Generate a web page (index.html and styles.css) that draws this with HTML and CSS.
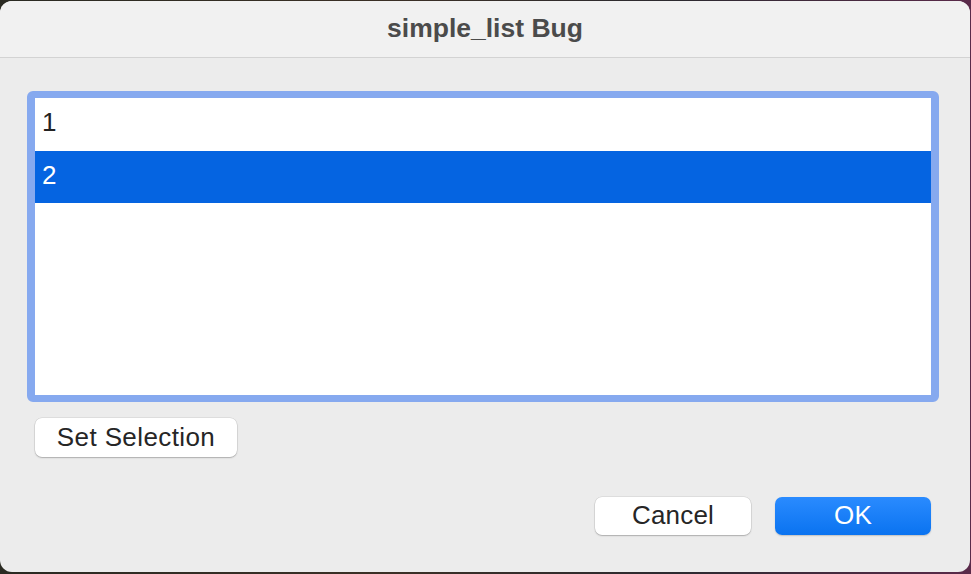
FILE: index.html
```html
<!DOCTYPE html>
<html>
<head>
<meta charset="utf-8">
<link rel="stylesheet" href="styles.css">
</head>
<body>
<div class="window">
  <div class="titlebar">simple_list Bug</div>
  <div class="content">
    <div class="listbox">
      <div class="row">1</div>
      <div class="row selected">2</div>
    </div>
    <div class="tools">
      <button class="btn">Set Selection</button>
    </div>
    <div class="actions">
      <button class="btn dialog">Cancel</button>
      <button class="btn dialog primary">OK</button>
    </div>
  </div>
</div>
</body>
</html>
```

FILE: styles.css
```css
html, body {
  margin: 0;
  padding: 0;
}
body {
  width: 971px;
  height: 574px;
  overflow: hidden;
  background: linear-gradient(90deg, #2a2a22 0%, #3b3026 40%, #2c2a30 70%, #5a2a4a 100%);
  font-family: "Liberation Sans", Arial, sans-serif;
}
.window {
  margin-top: 1px;
  width: 970px;
  height: 571px;
  border-radius: 12px;
  background: #ececec;
  overflow: hidden;
  display: flex;
  flex-direction: column;
}
.titlebar {
  flex: none;
  height: 57px;
  box-sizing: border-box;
  padding-bottom: 1px;
  background: #f1f1f1;
  border-bottom: 1px solid #d3d3d3;
  display: flex;
  align-items: center;
  justify-content: center;
  font-weight: bold;
  font-size: 26.5px;
  color: #4b4b4b;
}
.content {
  padding: 33px 31px 0 27px;
  display: flex;
  flex-direction: column;
}
.listbox {
  height: 311px;
  box-sizing: border-box;
  border: 7px solid #86a9ef;
  border-left-width: 8px;
  border-right-width: 8px;
  border-radius: 6px;
  background: #ffffff;
  display: flex;
  flex-direction: column;
}
.row {
  height: 52px;
  box-sizing: border-box;
  flex: none;
  display: flex;
  align-items: center;
  padding: 0 0 4px 7px;
  font-size: 26px;
  color: #222222;
}
.row:first-child {
  height: 53px;
}
.row.selected {
  background: #0564e1;
  color: #ffffff;
}
.tools {
  padding: 16px 0 0 8px;
  display: flex;
}
.btn {
  font-family: "Liberation Sans", Arial, sans-serif;
  font-size: 26px;
  letter-spacing: 0.4px;
  color: #262626;
  background: #ffffff;
  border: none;
  border-radius: 7px;
  box-shadow: 0 0 0 0.5px rgba(0, 0, 0, 0.12), 0 1px 1.5px rgba(0, 0, 0, 0.22);
  height: 39px;
  width: 202px;
  padding: 0 0 1px 0;
  display: flex;
  align-items: center;
  justify-content: center;
}
.actions {
  padding: 40px 8px 0 0;
  display: flex;
  justify-content: flex-end;
  gap: 24px;
}
.btn.dialog {
  width: 156px;
  height: 38px;
  font-size: 26px;
  letter-spacing: 0.2px;
}
.btn.primary {
  background: linear-gradient(180deg, #2a8bff 0%, #0a73f0 100%);
  color: #ffffff;
  box-shadow: 0 1px 1.5px rgba(0, 0, 0, 0.18);
}
```
